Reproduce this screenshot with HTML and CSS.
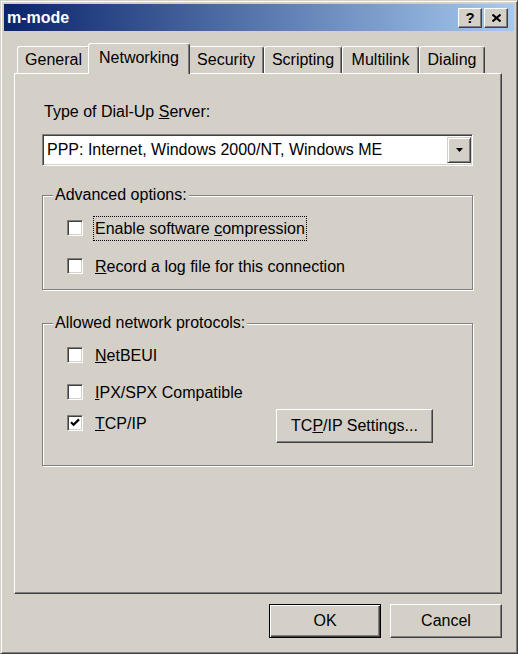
FILE: index.html
```html
<!DOCTYPE html>
<html>
<head>
<meta charset="utf-8">
<link rel="stylesheet" href="styles.css">
</head>
<body>
<div class="window">
  <div class="titlebar">
    <span class="title">m-mode</span>
    <div class="tbtns">
      <span class="tbtn help">?</span>
      <span class="tbtn close"><svg width="9" height="8" viewBox="0 0 9 8"><path d="M0.5 0.5 L8.5 7.5 M8.5 0.5 L0.5 7.5" stroke="#000" stroke-width="2" fill="none"/></svg></span>
    </div>
  </div>
  <div class="body">
    <div class="tabs">
      <div class="tab w-general">General</div>
      <div class="tab sel w-net">Networking</div>
      <div class="tab w-sec">Security</div>
      <div class="tab w-scr">Scripting</div>
      <div class="tab w-multi">Multilink</div>
      <div class="tab w-dial">Dialing</div>
    </div>
    <div class="panel">
      <div class="label">Type of Dial-Up <u>S</u>erver:</div>
      <div class="select">
        <span class="val">PPP: Internet, Windows 2000/NT, Windows ME</span>
        <span class="arrow"><svg width="7" height="4" viewBox="0 0 7 4"><path d="M0 0 H7 L3.5 4 Z" fill="#000"/></svg></span>
      </div>
      <fieldset class="group g1">
        <legend>Advanced options:</legend>
        <div class="row r1"><span class="cb"></span><span class="lbl focus">Enable software <u>c</u>ompression</span></div>
        <div class="row r2"><span class="cb"></span><span class="lbl"><u>R</u>ecord a log file for this connection</span></div>
      </fieldset>
      <fieldset class="group g2">
        <legend>Allowed network protocols:</legend>
        <div class="row p1"><span class="cb"></span><span class="lbl"><u>N</u>etBEUI</span></div>
        <div class="row p2"><span class="cb"></span><span class="lbl"><u>I</u>PX/SPX Compatible</span></div>
        <div class="row p3">
          <div class="cbwrap"><span class="cb"><svg width="12" height="12" viewBox="0 0 12 12"><path d="M2 5.2 L4.6 7.8 L10 2.4" stroke="#000" stroke-width="2.2" fill="none"/></svg></span><span class="lbl"><u>T</u>CP/IP</span></div>
          <button class="btn tcp">TC<u>P</u>/IP Settings...</button>
        </div>
      </fieldset>
    </div>
    <div class="footer">
      <button class="btn default">OK</button>
      <button class="btn">Cancel</button>
    </div>
  </div>
</div>
</body>
</html>
```
FILE: styles.css
```css
html, body {
  margin: 0;
  padding: 0;
  background: #d4d0c8;
}
body {
  font-family: "Liberation Sans", Arial, sans-serif;
  font-size: 16px;
  color: #000;
}
.window {
  width: 518px;
  height: 654px;
  box-sizing: border-box;
  border: 1px solid;
  border-color: #d4d0c8 #404040 #404040 #d4d0c8;
  box-shadow: inset 1px 1px #fff, inset -1px -1px #808080;
  padding: 3px;
  background: #d4d0c8;
}
.titlebar {
  height: 27px;
  background: linear-gradient(to right, #0a246a, #a6caf0);
  display: flex;
  align-items: center;
  padding-left: 3px;
}
.title {
  color: #fff;
  font-weight: bold;
  font-size: 16px;
  flex: 1;
}
.tbtns {
  display: flex;
  gap: 2px;
  margin-right: 6px;
}
.tbtn {
  width: 24px;
  height: 20px;
  box-sizing: border-box;
  background: #d4d0c8;
  border: 1px solid;
  border-color: #fff #404040 #404040 #fff;
  box-shadow: inset -1px -1px #808080;
  display: flex;
  align-items: center;
  justify-content: center;
}
.help {
  font-weight: bold;
  font-size: 15px;
  line-height: 1;
}
.body {
  padding: 12px 12px 0 10px;
}
.tabs {
  display: flex;
  align-items: flex-end;
  height: 30px;
  padding-left: 3px;
}
.tab {
  height: 27px;
  box-sizing: border-box;
  border-top: 1px solid #fff;
  border-left: 1px solid #fff;
  border-right: 1px solid #404040;
  box-shadow: inset -1px 0 #808080;
  border-radius: 3px 3px 0 0;
  display: flex;
  align-items: center;
  justify-content: center;
  background: #d4d0c8;
}
.tab.sel {
  height: 31px;
  margin: 0 -2px -1px -2px;
  padding-bottom: 2px;
  position: relative;
  z-index: 2;
}
.w-general { width: 73px; }
.w-net { width: 102px; }
.w-sec { width: 76px; }
.w-scr { width: 78px; }
.w-multi { width: 77px; }
.w-dial { width: 66px; }
.panel {
  width: 488px;
  height: 521px;
  box-sizing: border-box;
  border: 1px solid;
  border-color: #fff #404040 #404040 #fff;
  box-shadow: inset -1px -1px #808080;
  padding-left: 27px;
  display: flex;
  flex-direction: column;
  align-items: flex-start;
}
.label {
  margin-top: 28px;
  line-height: 20px;
  padding-left: 2px;
}
.select {
  margin-top: 12px;
  width: 431px;
  height: 32px;
  box-sizing: border-box;
  border: 1px solid;
  border-color: #808080 #fff #fff #808080;
  box-shadow: inset 1px 1px #404040, inset -1px -1px #d4d0c8;
  background: #fff;
  display: flex;
  align-items: center;
}
.val {
  flex: 1;
  padding-left: 4px;
  white-space: nowrap;
}
.arrow {
  width: 24px;
  height: 26px;
  margin-right: 1px;
  box-sizing: border-box;
  background: #d4d0c8;
  border: 1px solid;
  border-color: #d4d0c8 #404040 #404040 #d4d0c8;
  box-shadow: inset 1px 1px #fff, inset -1px -1px #808080;
  display: flex;
  align-items: center;
  justify-content: center;
}
.group {
  margin: 0;
  padding: 0;
  width: 431px;
  box-sizing: border-box;
  min-inline-size: 0;
  border: 1px solid #808080;
  box-shadow: inset 1px 1px #fff, 1px 1px #fff;
}
.group legend {
  margin-left: 10px;
  padding: 0 2px;
  line-height: 20px;
  background: #d4d0c8;
}
.g1 {
  margin-top: 19px;
  padding-bottom: 10px;
}
.g2 {
  margin-top: 23px;
  padding-bottom: 22px;
}
.row {
  display: flex;
  align-items: center;
  height: 26px;
  padding-left: 24px;
}
.r1 { margin-top: 10px; }
.r2 { margin-top: 12px; }
.p1 { margin-top: 9px; }
.p2 { margin-top: 11px; }
.p3 {
  margin-top: 5px;
  align-items: flex-start;
  height: auto;
}
.cbwrap {
  display: flex;
  align-items: center;
  height: 26px;
}
.cb {
  width: 16px;
  height: 16px;
  box-sizing: border-box;
  border: 1px solid;
  border-color: #808080 #fff #fff #808080;
  box-shadow: inset 1px 1px #404040, inset -1px -1px #d4d0c8;
  background: #fff;
  display: flex;
  align-items: center;
  justify-content: center;
  flex: none;
}
.lbl {
  margin-left: 10px;
  padding: 0 1px;
  line-height: 23px;
  border: 1px solid transparent;
  white-space: nowrap;
}
.lbl.focus {
  border: 1px dotted #000;
}
.btn {
  font-family: inherit;
  font-size: 16px;
  color: #000;
  background: #d4d0c8;
  padding: 0;
  margin: 0;
  box-sizing: border-box;
  border: 1px solid;
  border-color: #fff #404040 #404040 #fff;
  box-shadow: inset -1px -1px #808080;
  display: flex;
  align-items: center;
  justify-content: center;
  width: 112px;
  height: 34px;
}
.btn.tcp {
  width: 157px;
  margin-left: auto;
  margin-right: 39px;
  margin-top: -1px;
}
.btn.default {
  border: 1px solid #000;
  box-shadow: inset 1px 1px #fff, inset -1px -1px #404040, inset -2px -2px #808080;
}
.footer {
  display: flex;
  justify-content: flex-end;
  gap: 9px;
  margin-top: 10px;
}
```
